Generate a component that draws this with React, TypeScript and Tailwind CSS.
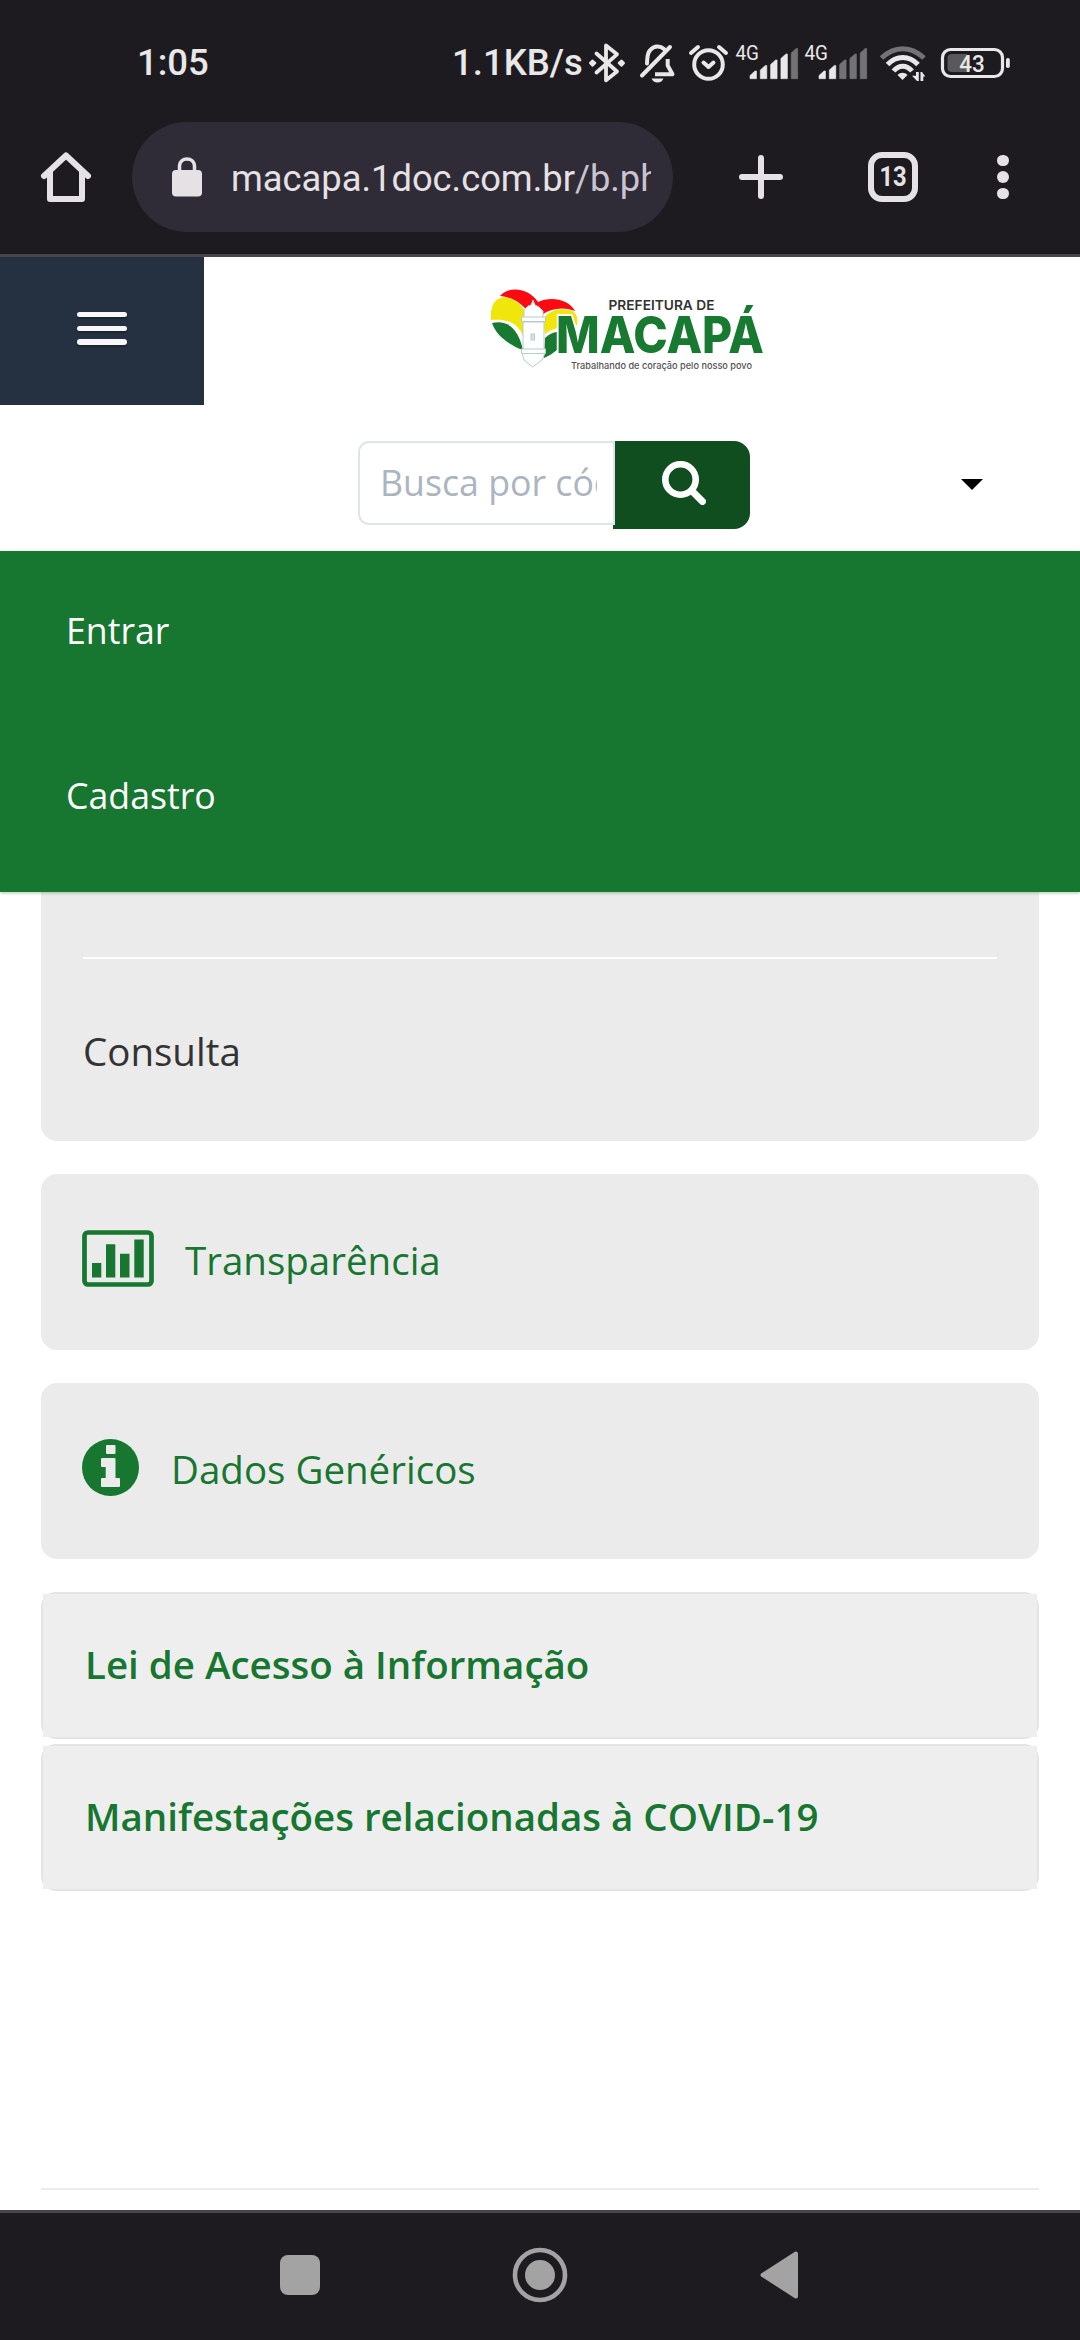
import React from "react";

const TONE = "#e8e8e8";
const DIM = "#737376";

function Bluetooth() {
  return (
    <svg className="h-[44px] w-[48px]" viewBox="585 40 48 44" fill="none" stroke={TONE} strokeWidth="3.8" strokeLinejoin="round" strokeLinecap="round">
      <path d="M596.500 52.500L617 70.500L606 79.300V44.500L617 53.300L596.500 71.500" />
      <path d="M592.500 59.500L595.300 62L592.500 64.800L590 62ZM621.500 59.500L624 62L621.500 64.800L618.700 62Z" fill={TONE} strokeWidth="2" />
    </svg>
  );
}

function BellOff() {
  return (
    <svg className="h-[44px] w-[49px]" viewBox="633 40 49 44" fill="none" stroke={TONE} strokeWidth="4">
      <path d="M664 48C660 44.500 654 44.800 650.300 49C646.500 53 647.500 58 647 62.500" strokeLinecap="round" />
      <path d="M667.700 58V64.500L672.500 73.300H655" strokeLinejoin="round" />
      <path d="M642 74.500L670 46" strokeLinecap="round" />
      <path d="M651.500 77.500H663.500C662 80.500 660 81.500 657.500 81.500C655 81.500 653 80.500 651.500 77.500Z" fill={TONE} stroke="none" />
    </svg>
  );
}

function Alarm() {
  return (
    <svg className="h-[44px] w-[50px]" viewBox="682 40 50 44" fill="none" stroke={TONE} strokeWidth="4" strokeLinecap="round">
      <circle cx="708.500" cy="63.500" r="14.300" />
      <path d="M703.500 61.500L708.500 66L713.500 61.500" strokeLinejoin="round" />
      <path d="M691 52L698 46M726 52L719 46" />
    </svg>
  );
}

function Signal({ left, lit, width }: { left: number; lit: number; width: string }) {
  const tops = [70, 64.500, 59, 53, 47.500];
  const w = width === "w-[69px]" ? 69 : 72;
  return (
    <svg className={`h-[44px] ${width}`} viewBox={`${left} 40 ${w} 44`}>
      <text x={left + 3.500} y="59" fontSize="19.500" fontWeight="400" fill={TONE} fontFamily="Roboto, sans-serif" textLength="23.500" lengthAdjust="spacingAndGlyphs">4G</text>
      {tops.map((top, i) => {
        const x = left + 18 + i * 10.300;
        return <path key={i} d={`M${x} ${top + 4.500}L${x + 5} ${top}H${x + 6.500}V77.700H${x}Z`} fill={i < lit ? TONE : DIM} stroke={i < lit ? TONE : DIM} strokeWidth=".6" strokeLinejoin="round" />;
      })}
    </svg>
  );
}

function Wifi() {
  return (
    <svg className="h-[44px] w-[61px]" viewBox="873 40 61 44" fill="none" strokeWidth="5">
      <path d="M881.500 57C894.500 44.500 911 44.500 924 57" stroke={DIM} />
      <path d="M887.500 63.500C896.500 54 909 54 918 63.500" stroke={TONE} />
      <path d="M893.500 70C899 63.500 906.500 63.500 912 70" stroke={TONE} />
      <path d="M897.500 74C900.500 71 904.500 71 907.500 74L902.500 79Z" fill={TONE} stroke="none" />
      <path d="M916 71H918.800V80H917L912 74.800H916ZM920.500 80V71H922L925.300 75.500H923.300V80Z" fill={TONE} stroke="none" />
    </svg>
  );
}

function Battery() {
  return (
    <svg className="h-[44px] w-[80px]" viewBox="934 40 80 44">
      <rect x="942.500" y="48.500" width="60" height="27" rx="8" fill="none" stroke={TONE} strokeWidth="3.200" />
      <path d="M952 53H967V71H952C949 71 947.500 69.500 947.500 67V57C947.500 54.500 949 53 952 53Z" fill="#59595b" />
      <rect x="1006" y="57" width="3.800" height="10" rx="1.800" fill={TONE} />
      <text x="972" y="70.700" textAnchor="middle" fontSize="23.500" fontWeight="500" fill={TONE} fontFamily="Roboto, sans-serif" textLength="25.500" lengthAdjust="spacingAndGlyphs">43</text>
    </svg>
  );
}

function Logo() {
  return (
    <svg className="h-[130px] w-[340px]" viewBox="460 260 340 130">
      <path d="M500 296C508 286 528 287 538 302C550 296 569 299 575 311C562 306 551 309 543 314H530C522 303 512 297 500 296Z" fill="#fb0a12" />
      <path d="M491 320C490 307 494 299 502 297.500C515 296 527 308 528 322L523 336C517 321 505 319 491 320Z" fill="#f1e60c" />
      <path d="M543 319C550 309 564 307 574 312C577 315 578 320 577 325C566 326 552 328 545 334Z" fill="#f1e60c" />
      <path d="M492 323C509 319 519 331 523 350C511 346 496 336 492 323Z" fill="#187a30" />
      <path d="M545 338C549 334 553 332.500 557 332V350C553 353 549 356 544 358Z" fill="#187a30" />
      <g fill="#fdfefe" stroke="#bccaca" strokeWidth="1">
        <path d="M522 353H545L542 360L532.500 367L524 360Z" />
        <path d="M523 322H544V353H523Z" />
        <path d="M524 318V310L528 306L531 305L533 300L535 305L539 307L543 311V318Z" />
        <rect x="521.500" y="317" width="24" height="4.500" />
        <rect x="521.500" y="349" width="24" height="4.500" />
        <rect x="531" y="334" width="3.500" height="6" fill="#d9e0e0" />
      </g>
      <g fontFamily="Inter, sans-serif">
        <text x="608.500" y="309.800" fontSize="13" fontWeight="600" fill="#333" textLength="106" lengthAdjust="spacingAndGlyphs">PREFEITURA DE</text>
        <text x="556" y="353" fontSize="51" fontWeight="800" fill="#187a30" stroke="#fff" strokeWidth="4" style={{ paintOrder: "stroke" }} textLength="208" lengthAdjust="spacingAndGlyphs">MACAPÁ</text>
        <text x="571" y="368.500" fontSize="9.500" fontWeight="500" fill="#555" textLength="181" lengthAdjust="spacingAndGlyphs">Trabalhando de coração pelo nosso povo</text>
      </g>
    </svg>
  );
}

function ChartIcon() {
  return (
    <svg className="h-[58px] w-[73px]" viewBox="0 0 73 58" fill="#17762f">
      <rect x="2.500" y="2.500" width="67" height="52" rx="3.500" fill="none" stroke="#17762f" strokeWidth="4.700" />
      <path d="M10 33H19.300V47.500H10ZM24 14.300H33.300V47.500H24ZM38 23.700H47.500V47.500H38ZM52.300 9.500H61.700V47.500H52.300Z" />
    </svg>
  );
}

function InfoIcon() {
  return (
    <svg className="mr-[2px] h-[57px] w-[57px]" viewBox="0 0 57 57">
      <circle cx="28.500" cy="28.500" r="28.500" fill="#17762f" />
      <g fill="#ebebeb">
        <rect x="24" y="6" width="9.500" height="9" rx="1" />
        <path d="M20 19H32.500Q33.500 19 33.500 20V39H37Q38 39 38 40V47Q38 48 37 48H20Q19 48 19 47V40Q19 39 20 39H23.700V28H20Q19 28 19 27V20Q19 19 20 19Z" />
      </g>
    </svg>
  );
}

function LinkCard({ icon, label }: { icon: React.ReactNode; label: string }) {
  return (
    <a className="mt-[33px] flex h-[176px] items-start rounded-[16px] bg-[#ebebeb] pl-[41px] pt-[56px] text-[#17762f]">
      {icon}
      <span className="ml-[30px] text-[38.500px] leading-[60px]">{label}</span>
    </a>
  );
}

function Panel({ label }: { label: string }) {
  return (
    <div className="h-[147px] rounded-[15px] border-2 border-[#e4e4e4]">
      <div className="flex h-full items-center bg-[#eee] pb-[2px] pl-[42px] text-[38.500px] font-semibold text-[#17762f]">{label}</div>
    </div>
  );
}

export default function App() {
  return (
    <div className="flex h-[2340px] w-[1080px] flex-col overflow-hidden bg-white font-['Open_Sans',sans-serif]">
      <header className="h-[257px] shrink-0 border-b-[3px] border-[#48464d] bg-[#1d1b20] font-[Roboto,sans-serif]">
        <div className="flex h-[122px] items-center pt-[3px] text-[36.500px] font-medium text-[#e8e8e8]">
          <span className="ml-[137px] w-[315px] pt-[2px]">1:05</span>
          <span className="w-[133px] whitespace-nowrap pt-[2px]">1.1KB/s</span>
          <Bluetooth />
          <BellOff />
          <Alarm />
          <Signal left={732} lit={4} width="w-[69px]" />
          <Signal left={801} lit={2} width="w-[72px]" />
          <Wifi />
          <Battery />
        </div>
        <div className="flex h-[110px] items-center">
          <svg className="ml-[38px] h-[56px] w-[56px]" viewBox="38 149 56 56" fill="none" stroke="#e6e1e5" strokeWidth="6" strokeLinejoin="round" strokeLinecap="round">
            <path d="M44 176L66 155.500L88 176M50 172V199H82V172" />
          </svg>
          <div className="ml-[38px] flex h-[110px] w-[541px] items-center rounded-full bg-[#2f2c37] pl-[40px]">
            <svg className="h-[40px] w-[30px]" viewBox="0 0 30 40">
              <rect y="13" width="30" height="26.500" rx="4" fill="#e6e1e5" />
              <path d="M7.500 15V9.500C7.500 -0.500 22.500 -0.500 22.500 9.500V15" fill="none" stroke="#e6e1e5" strokeWidth="3.500" />
            </svg>
            <div className="ml-[29px] w-[420px] overflow-hidden whitespace-nowrap pt-[5px] text-[36.300px] text-[#e6e1e5]">
              macapa.1doc.com.br<span className="text-[#c9c4d0]">/b.php</span>
            </div>
          </div>
          <svg className="ml-[66px] h-[44px] w-[44px]" viewBox="0 0 44 44" stroke="#e6e1e5" strokeWidth="6" strokeLinecap="round">
            <path d="M22 3V41M3 22H41" />
          </svg>
          <div className="ml-[85px] flex h-[50px] w-[50px] items-center justify-center rounded-[14px] border-[6px] border-[#e6e1e5] text-[28px] font-bold leading-none text-[#e6e1e5]">
            <span className="scale-x-[.85]">13</span>
          </div>
          <div className="ml-[79px] flex flex-col gap-[5px]">
            <i className="h-[11.500px] w-[12px] rounded-full bg-[#e6e1e5]" />
            <i className="h-[11.500px] w-[12px] rounded-full bg-[#e6e1e5]" />
            <i className="h-[11.500px] w-[12px] rounded-full bg-[#e6e1e5]" />
          </div>
        </div>
      </header>

      <div className="flex h-[148px] shrink-0">
        <button className="flex w-[204px] flex-col items-center bg-[#253140] pt-[55px]">
          <i className="h-[5px] w-[50px] rounded-full bg-[#f7f7fa] shadow-[0_2px_1px_rgba(0,0,0,.25)]" />
          <i className="mt-[9px] h-[5px] w-[50px] rounded-full bg-[#f7f7fa] shadow-[0_2px_1px_rgba(0,0,0,.25)]" />
          <i className="mt-[8px] h-[6px] w-[50px] rounded-full bg-[#f7f7fa] shadow-[0_2px_1px_rgba(0,0,0,.25)]" />
        </button>
        <div className="ml-[256px] mt-[3px]">
          <Logo />
        </div>
      </div>

      <div className="flex h-[146px] shrink-0 items-start pt-[36px]">
        <div className="relative z-10 ml-[358px] h-[84px] w-[257px] rounded-l-[11px] border-2 border-[#dde5ea] bg-white pl-[20px] pr-[16px] text-[35.700px] leading-[78px] text-[#abb5bf]">
          <div className="overflow-hidden whitespace-nowrap">Busca por código</div>
        </div>
        <button className="-ml-[2px] flex h-[88px] w-[137px] items-center justify-center rounded-r-[16px] bg-[#104e1f] pb-[4px] pl-[5px]">
          <svg className="h-[44px] w-[44px]" viewBox="0 0 44 44" fill="none" stroke="#fff">
            <circle cx="18.500" cy="18.500" r="15.200" strokeWidth="6.600" />
            <path d="M30 30L40.500 40.500" strokeWidth="7" strokeLinecap="round" />
          </svg>
        </button>
        <svg className="ml-[211px] mt-[38px] h-[11px] w-[22px]" viewBox="0 0 22 11">
          <path d="M0 0H22L11 11Z" />
        </svg>
      </div>

      <nav className="relative z-10 h-[341px] shrink-0 bg-[#17762f] pl-[66px] text-[35.700px] leading-[50px] text-white shadow-[0_1px_3px_rgba(24,120,48,.4)]">
        <a className="block pt-[54px]">Entrar</a>
        <a className="block pt-[115px]">Cadastro</a>
      </nav>

      <main className="mx-[41px] flex flex-1 flex-col">
        <section className="h-[249px] rounded-b-[16px] bg-[#ebebeb] px-[42px] pt-[65px]">
          <hr className="border-t-2 border-white" />
          <p className="mt-[62px] text-[38.500px] leading-[60px] text-[#333]">Consulta</p>
        </section>
        <LinkCard icon={<ChartIcon />} label="Transparência" />
        <LinkCard icon={<InfoIcon />} label="Dados Genéricos" />
        <div className="mt-[33px] flex flex-col gap-[5px]">
          <Panel label="Lei de Acesso à Informação" />
          <Panel label="Manifestações relacionadas à COVID-19" />
        </div>
        <hr className="mb-[20px] mt-auto border-t-2 border-[#eceeee]" />
      </main>

      <footer className="flex h-[130px] shrink-0 items-center border-t-[3px] border-[#48464d] bg-[#1d1b20] pb-[3px]">
        <i className="ml-[280px] h-[40px] w-[40px] rounded-[8px] bg-[#a3a3a3]" />
        <svg className="ml-[192px] h-[56px] w-[56px]" viewBox="0 0 56 56">
          <circle cx="28" cy="28" r="25" fill="none" stroke="#a3a3a3" strokeWidth="4.600" />
          <circle cx="28" cy="28" r="15" fill="#a3a3a3" />
        </svg>
        <svg className="ml-[192px] h-[48px] w-[40px]" viewBox="0 0 40 48">
          <path d="M2.500 24L36 2.500V45.500Z" fill="#a3a3a3" stroke="#a3a3a3" strokeWidth="4" strokeLinejoin="round" />
        </svg>
      </footer>
    </div>
  );
}
